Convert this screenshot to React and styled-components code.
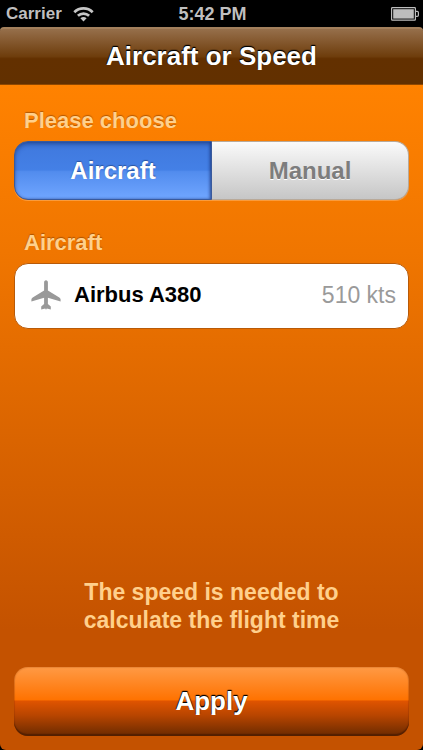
import React, { useState } from "react";
import styled, { createGlobalStyle } from "styled-components";

const GlobalStyle = createGlobalStyle`
  *, *::before, *::after { box-sizing: border-box; }
  body {
    margin: 0;
    background: #000;
    font-family: "Liberation Sans", Helvetica, Arial, sans-serif;
  }
  button { font-family: inherit; cursor: pointer; }
`;

const Screen = styled.div`
  display: flex;
  flex-direction: column;
  min-height: 100vh;
  background: #000;
`;

const StatusBar = styled.div`
  display: grid;
  grid-template-columns: 1fr auto 1fr;
  align-items: center;
  height: 27px;
  padding: 0 4px 0 6px;
  color: #bfbfbf;
  font-weight: bold;
  line-height: 26px;
`;

const StatusGroup = styled.div`
  display: flex;
  align-items: center;
  justify-content: ${(p) => (p.$end ? "flex-end" : "flex-start")};
  gap: 11px;
  font-size: 17px;
`;

const Clock = styled.span`
  font-size: 18px;
`;

const NavBar = styled.header`
  display: flex;
  align-items: center;
  justify-content: center;
  height: 58px;
  padding-bottom: 2px;
  border-top: 2px solid #a3805c;
  border-bottom: 1px solid #8f4800;
  border-radius: 4px 4px 0 0;
  background: linear-gradient(#966f4b, #6e3d0c 50%, #633000 54%, #623000);
`;

const Title = styled.h1`
  margin: 0;
  color: #fff;
  font-size: 26px;
  line-height: 32px;
  text-shadow: 0 -1px 1px #000, 0 -1px 1px #000;
`;

const Content = styled.main`
  flex: 1;
  display: flex;
  flex-direction: column;
  padding: 23px 14px 14px;
  border-radius: 0 0 6px 6px;
  background: linear-gradient(#ff8200, #f07600 25%, #c45200 82%);
`;

const SectionLabel = styled.h2`
  margin: 0 0 7px;
  padding-left: 10px;
  color: #ffd08c;
  font-size: 22px;
  line-height: 26px;
  text-shadow: 0 -1px 1px rgba(130, 60, 0, 0.6);
`;

const Segmented = styled.div`
  display: flex;
  height: 59px;
  margin-bottom: 30px;
  border-radius: 14px;
  box-shadow: 0 1px 0 rgba(255, 190, 120, 0.5);
`;

const Segment = styled.button`
  flex: 1;
  padding: 0;
  border: 1px solid ${(p) => (p.$active ? "#3a5a9c" : "#b8a999")};
  border-radius: ${(p) => (p.$first ? "14px 0 0 14px" : "0 14px 14px 0")};
  border-left-width: ${(p) => (p.$first ? "1px" : "0")};
  background: ${(p) =>
    p.$active
      ? "linear-gradient(#3f78dd, #4480e6 49%, #528cee 52%, #70a6ff)"
      : "linear-gradient(#fafafa, #c6c6c6)"};
  box-shadow: ${(p) =>
    p.$active
      ? "inset 0 3px 4px rgba(20, 45, 110, 0.4), inset -1px 0 3px rgba(20, 45, 110, 0.6)"
      : "none"};
  color: ${(p) => (p.$active ? "#fff" : "#7d7d7d")};
  font-size: 24px;
  font-weight: bold;
  text-shadow: ${(p) => (p.$active ? "0 -1px 1px #2b549f" : "0 1px 0 #fff")};
`;

const AircraftCell = styled.button`
  display: flex;
  align-items: center;
  height: 66px;
  padding: 0 12px 2px 16px;
  border: 1px solid #b85a08;
  border-radius: 14px;
  background: #fff;
  text-align: left;
`;

const AircraftName = styled.span`
  flex: 1;
  padding-left: 13px;
  color: #000;
  font-size: 22px;
  font-weight: bold;
`;

const AircraftSpeed = styled.span`
  color: #9a9a9a;
  font-size: 23px;
`;

const Hint = styled.p`
  margin: auto auto 33px;
  max-width: 280px;
  color: #ffd08c;
  font-size: 23px;
  font-weight: bold;
  line-height: 28px;
  text-align: center;
`;

const ApplyButton = styled.button`
  height: 69px;
  padding: 0;
  border: 0;
  border-radius: 14px;
  background: linear-gradient(#ff9a45, #ff7200 48%, #e05400 49%, #b84500 70%, #6a2a00);
  box-shadow:
    inset 0 -2px 1px rgba(70, 25, 0, 0.7),
    inset 0 0 1px 1px rgba(150, 60, 0, 0.2);
  color: #fff;
  font-size: 26px;
  font-weight: bold;
  text-shadow: 0 -1px 1px #000, 0 -1px 1px #000;
`;

const WifiIcon = () => (
  <svg width="21" height="16" viewBox="0 0 21 16" aria-hidden="true">
    <g fill="none" stroke="#c6c6c6" strokeWidth="2.7">
      <path d="M1.3 6.2a13.2 13.2 0 0 1 18.4 0" />
      <path d="M4.9 9.8a8.2 8.2 0 0 1 11.2 0" />
    </g>
    <path d="M7.4 12.3a4.7 4.7 0 0 1 6.2 0L10.5 15.6z" fill="#c6c6c6" />
  </svg>
);

const BatteryIcon = () => (
  <svg width="28" height="14" viewBox="0 0 28 14" aria-hidden="true">
    <rect x="0.6" y="0.6" width="23.8" height="12.6" rx="0.8" fill="none" stroke="#bdbdbd" strokeWidth="1.2" />
    <rect x="2.2" y="2.2" width="20.6" height="9.4" fill="#bdbdbd" />
    <path d="M24.6 4.4h1.6q1.2 0 1.2 1.2v2.6q0 1.2-1.2 1.2h-1.6" fill="none" stroke="#bdbdbd" strokeWidth="1.2" />
  </svg>
);

const PlaneIcon = () => (
  <svg width="30" height="30" viewBox="0 0 30 30" aria-hidden="true">
    <path
      d="M15 0.3C16.2 0.3 16.9 1.2 16.9 2.6V10.6L28.3 17.5Q29.6 18.4 29.6 19.6V21.4L16.9 17.7V24L19.8 26.4V29.6L15.8 28.6L15 29.8L14.2 28.6L10.2 29.6V26.4L13.1 24V17.7L0.4 21.4V19.6Q0.4 18.4 1.7 17.5L13.1 10.6V2.6C13.1 1.2 13.8 0.3 15 0.3Z"
      fill="#999"
    />
  </svg>
);

const MODES = ["Aircraft", "Manual"];

export default function App() {
  const [mode, setMode] = useState("Aircraft");

  return (
    <>
      <GlobalStyle />
      <Screen>
        <StatusBar>
          <StatusGroup>
            <span>Carrier</span>
            <WifiIcon />
          </StatusGroup>
          <Clock>5:42 PM</Clock>
          <StatusGroup $end>
            <BatteryIcon />
          </StatusGroup>
        </StatusBar>
        <NavBar>
          <Title>Aircraft or Speed</Title>
        </NavBar>
        <Content>
          <SectionLabel id="mode-label">Please choose</SectionLabel>
          <Segmented role="group" aria-labelledby="mode-label">
            {MODES.map((name, i) => (
              <Segment
                key={name}
                type="button"
                $first={i === 0}
                $active={mode === name}
                aria-pressed={mode === name}
                onClick={() => setMode(name)}
              >
                {name}
              </Segment>
            ))}
          </Segmented>
          <SectionLabel>Aircraft</SectionLabel>
          <AircraftCell type="button">
            <PlaneIcon />
            <AircraftName>Airbus A380</AircraftName>
            <AircraftSpeed>510 kts</AircraftSpeed>
          </AircraftCell>
          <Hint>The speed is needed to calculate the flight time</Hint>
          <ApplyButton type="button">Apply</ApplyButton>
        </Content>
      </Screen>
    </>
  );
}
